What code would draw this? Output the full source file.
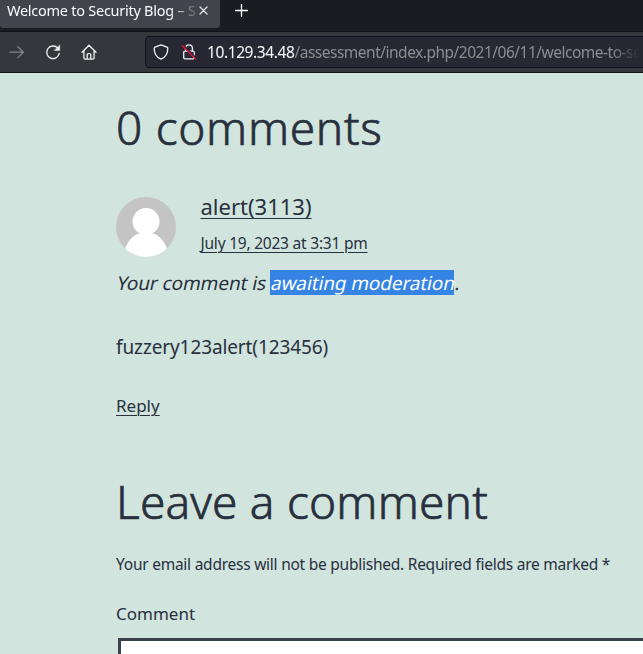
<template>
  <div class="window">
    <header class="tabs">
      <div class="tab">
        <span class="tab-title">Welcome to Security Blog – S</span>
        <svg class="close" width="9" height="9" viewBox="0 0 9 9"><path d="M1 1l7 7M8 1L1 8" /></svg>
      </div>
      <svg class="plus" width="13" height="13" viewBox="0 0 13 13"><path d="M6.5.5v12M.5 6.5h12" /></svg>
    </header>

    <nav class="toolbar">
      <svg class="icon forward" width="16" height="16" viewBox="0 0 16 16"><path d="M1 8.2h13.2M8.900 2.800l5.400 5.400-5.400 5.400" /></svg>
      <svg class="icon reload" width="16" height="16" viewBox="0 0 16 16">
        <path d="M12.800 4.200A6.300 6.300 0 1 0 14.200 9.400" /><path class="fill" d="M14.700 1.200v5.200H9.500z" />
      </svg>
      <svg class="icon home" width="16" height="16" viewBox="0 0 16 16">
        <path d="M1 8.200L8 1.300l7 6.900M2.900 6.600v7.200q0 1.300 1.300 1.300h7.600q1.300 0 1.300-1.300V6.600M6.200 15V10.600q0-1 1-1h1.600q1 0 1 1V15" />
      </svg>
      <div class="address">
        <svg class="icon shield" width="16" height="16" viewBox="0 0 16 16">
          <path d="M8 .9l6 2.300q.8.300.8 1.200C14.800 9 12.600 13.200 8 15.200 3.400 13.200 1.200 9 1.200 4.400q0-.9.8-1.200z" />
        </svg>
        <svg class="icon lock" width="16" height="16" viewBox="0 0 16 16">
          <path d="M4.600 7V4.300a3.400 3.400 0 0 1 6.800 0V7M4 7.200h8q1.300 0 1.300 1.300v5q0 1.300-1.300 1.300H4q-1.300 0-1.300-1.300v-5q0-1.300 1.300-1.300z" />
          <path class="cut" d="M2.500 1.200l13 13" /><path class="slash" d="M1.300 1.800L14.500 15" />
        </svg>
        <span class="url"><span class="host">10.129.34.48</span>/assessment/index.php/2021/06/11/welcome-to-se</span>
      </div>
    </nav>

    <main class="page">
      <h2 class="title count">0 comments</h2>
      <section class="author">
        <svg class="avatar" width="60" height="60" viewBox="0 0 60 60">
          <defs><clipPath id="round"><circle cx="30" cy="30" r="30" /></clipPath></defs>
          <g clip-path="url(#round)">
            <rect width="60" height="60" fill="#c4c4c4" />
            <circle cx="30" cy="24.500" r="13.500" fill="#fff" />
            <path d="M7 60C9 45 18 36 26 36h8c8 0 17 9 19 24z" fill="#fff" />
          </g>
        </svg>
        <div class="meta">
          <a class="name">alert(3113)</a>
          <a class="date">July 19, 2023 at 3:31 pm</a>
        </div>
      </section>
      <p class="pending">
        <span class="slant lead">Your comment is</span>
        <span class="selected"><span class="slant">awaiting moderation</span></span>
        <span class="slant">.</span>
      </p>
      <p class="body">fuzzery123alert(123456)</p>
      <a class="reply">Reply</a>
      <h2 class="title leave">Leave a comment</h2>
      <p class="note">Your email address will not be published. Required fields are marked *</p>
      <label class="label">Comment</label>
      <div class="field"></div>
    </main>
  </div>
</template>

<style>
body { margin: 0; overflow: hidden; }
</style>

<style scoped>
.window { width: 643px; height: 654px; overflow: hidden; display: flex; flex-direction: column; background: #d1e4dd; color: #28303d; font-family: "Noto Sans", sans-serif; }
.tabs { box-sizing: border-box; height: 32px; flex: none; display: flex; background: #1b1c22; border-bottom: 1px solid #111217; }
.tab { box-sizing: border-box; width: 220px; height: 28px; padding: 0 11px 8px 7px; display: flex; align-items: center; background: #42444c; border-radius: 0 0 3px 3px; }
.tab-title { width: 192px; flex: none; white-space: nowrap; color: #fbfbfe; font-size: 14.500px; line-height: 22px; letter-spacing: -.26px; mask-image: linear-gradient(to right, #000 162px, transparent 194px); }
svg path { fill: none; stroke: currentColor; stroke-width: 1.300; stroke-linecap: round; stroke-linejoin: round; }
.avatar path { fill: #fff; stroke: none; }
.close { color: #e5e5e9; }
.plus { margin: 4px 0 0 15px; color: #fbfbfe; }
.toolbar { box-sizing: border-box; height: 41px; flex: none; display: flex; align-items: center; padding-left: 9px; background: #35373d; border-bottom: 1px solid #101116; color: #f2f2f5; }
.icon { flex: none; display: block; }
.forward { color: #85868a; }
.reload { margin-left: 20px; }
.home { margin-left: 20px; }
svg .fill { fill: currentColor; stroke-width: .5; }
.address { box-sizing: border-box; width: 510px; height: 32px; flex: none; margin-left: 48px; padding-left: 7px; display: flex; align-items: center; background: #272833; border: 1px solid #101116; border-radius: 4px; }
.lock { margin-left: 12px; }
svg .cut { stroke: #272833; stroke-width: 1.500; }
svg .slash { stroke: #e3123f; stroke-width: 1.500; }
.url { width: 434px; flex: none; margin-left: 10px; white-space: nowrap; color: #8c8c92; font-size: 15.500px; line-height: 24px; letter-spacing: -.5px; mask-image: linear-gradient(to right, #000 405px, transparent 432px); }
.host { color: #fbfbfe; letter-spacing: -.4px; }
.page { flex: 1; padding: 24px 0 0 116px; display: flex; flex-direction: column; align-items: flex-start; white-space: nowrap; }
.title, p { margin: 0; flex: none; }
.title { font-size: 46px; line-height: 60px; font-weight: 300; -webkit-text-stroke: .7px #28303d; }
.count { letter-spacing: .7px; }
.leave { margin-top: 53px; letter-spacing: .2px; }
.author { margin-top: 34px; height: 66px; display: flex; }
.avatar { margin-top: 6px; }
.meta { margin-left: 24.500px; display: flex; flex-direction: column; align-items: flex-start; }
a { text-decoration: underline; text-decoration-thickness: 1px; text-underline-offset: 3px; }
.name { font-size: 22px; line-height: 30px; }
.date { margin-top: 10px; font-size: 15.500px; line-height: 24px; letter-spacing: -.22px; }
.pending { margin-top: 13px; display: flex; height: 26px; font-size: 19px; line-height: 26px; letter-spacing: -.08px; }
.slant { display: block; transform: skewX(-12deg); transform-origin: 0 20px; }
.lead { width: 154px; }
.selected { box-sizing: border-box; width: 184px; height: 25px; background: #3584e4; color: #fff; letter-spacing: -.12px; }
.body { margin-top: 38px; font-size: 19px; line-height: 26px; letter-spacing: -.11px; }
.reply { margin-top: 34px; font-size: 17px; line-height: 24px; }
.note { margin-top: 21px; font-size: 15.500px; line-height: 24px; letter-spacing: -.245px; }
.label { margin-top: 26px; font-size: 17px; line-height: 24px; }
.field { box-sizing: border-box; width: 560px; height: 90px; flex: none; margin: 12px 0 0 2px; background: #fff; border: 3px solid #39414d; }
</style>
